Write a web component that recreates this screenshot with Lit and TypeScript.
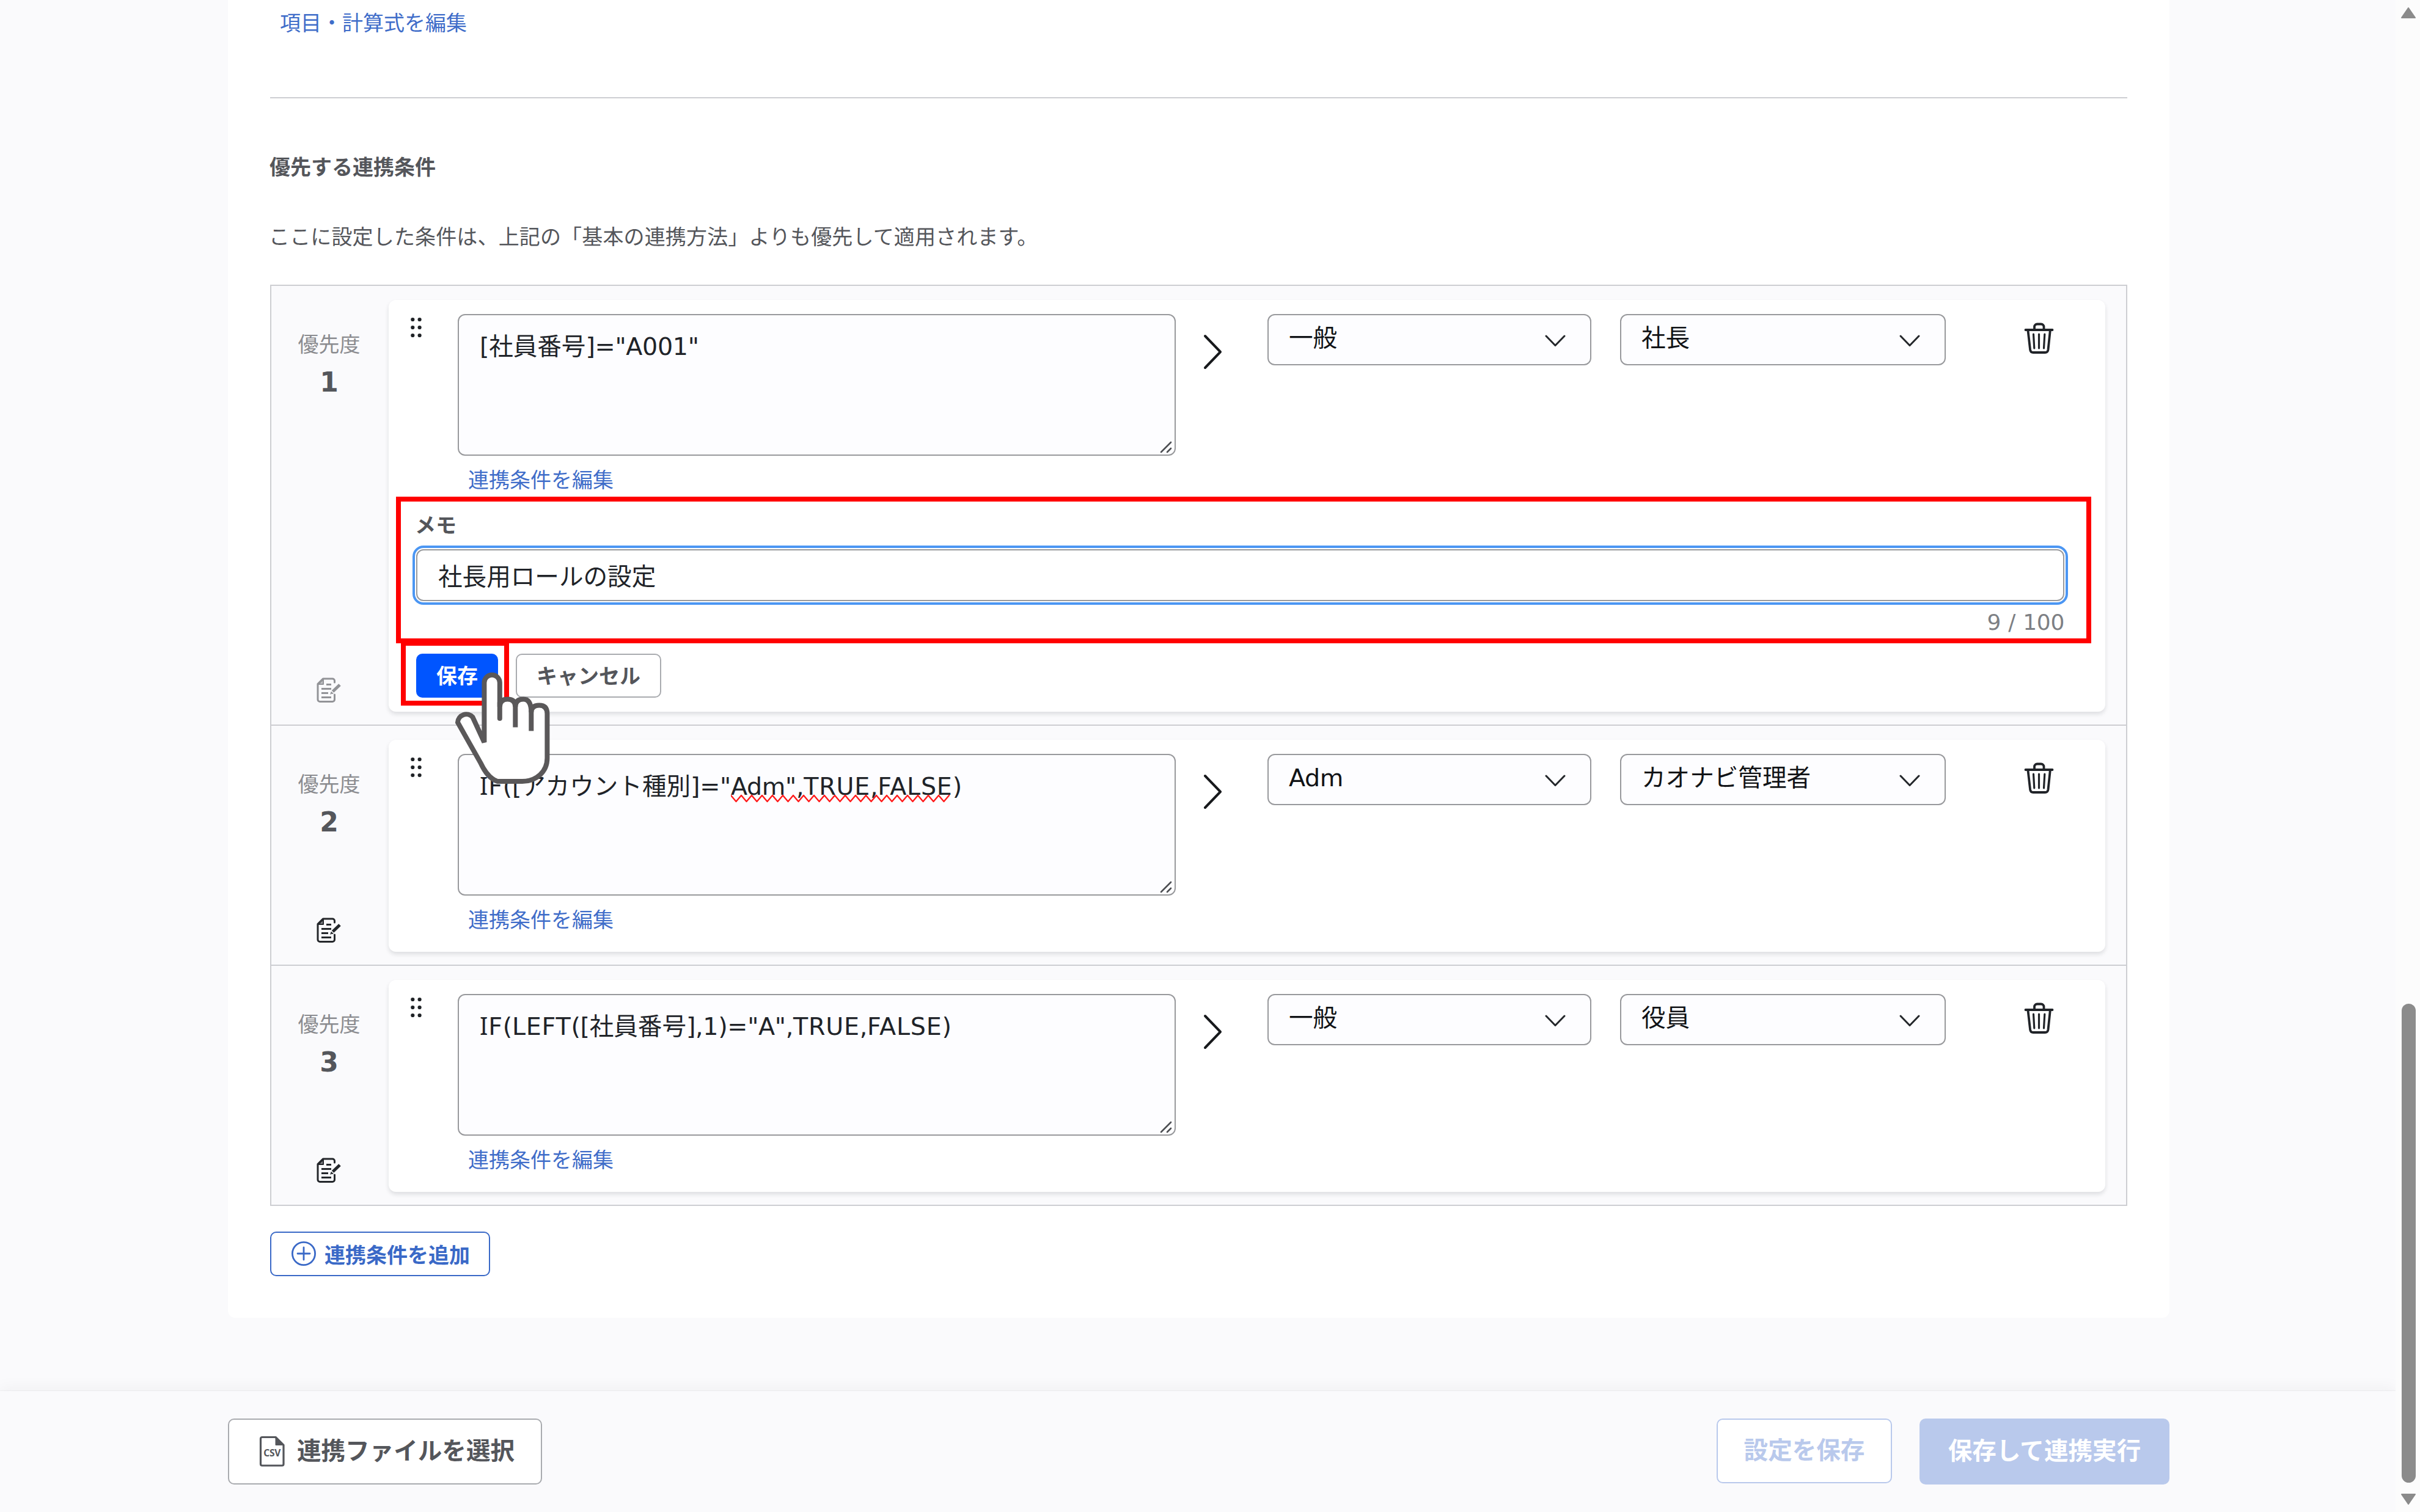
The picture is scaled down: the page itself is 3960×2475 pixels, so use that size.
import { LitElement, html, svg, css, nothing } from "lit";
import { customElement, property } from "lit/decorators.js";

interface Condition {
  order: number;
  formula: string;
  misspelled?: string;
  tail?: string;
  source: string;
  role: string;
  memo?: string;
}

const CONDITIONS: Condition[] = [
  { order: 1, formula: '[社員番号]="A001"', source: "一般", role: "社長", memo: "社長用ロールの設定" },
  {
    order: 2,
    formula: 'IF([アカウント種別]="',
    misspelled: 'Adm",TRUE,FALSE',
    tail: ")",
    source: "Adm",
    role: "カオナビ管理者",
  },
  { order: 3, formula: 'IF(LEFT([社員番号],1)="A",TRUE,FALSE)', source: "一般", role: "役員" },
];

const keyword = (text: string) => (text === "IF" ? html`<span class="cap-i">I</span>F` : text);

/* Latin runs are set in a wider face than the Japanese text around them,
   and function names and constants a little looser still. */
const mixed = (text: string) =>
  text
    .split(/([\x20-\x7e]+)/)
    .filter((part) => part)
    .map((part) =>
      /^[\x20-\x7e]/.test(part)
        ? html`<span class="latin">${part
            .split(/([A-Z]{2,})/)
            .filter((c) => c)
            .map((c) => (/^[A-Z]{2,}$/.test(c) ? html`<span class="caps">${keyword(c)}</span>` : c))}</span>`
        : part
    );

const shared = css`
  *,
  *::before,
  *::after {
    box-sizing: border-box;
  }
  svg {
    display: block;
    fill: none;
    stroke: currentColor;
    stroke-linecap: round;
    stroke-linejoin: round;
  }
  .latin {
    font-family: "DejaVu Sans", sans-serif;
    letter-spacing: -0.008em;
    line-height: 0;
    white-space: pre;
  }
  .caps {
    letter-spacing: 0.02em;
  }
  .cap-i {
    font-family: "Noto Sans", sans-serif;
  }
  .link {
    color: #3f6dc9;
    font-size: 34px;
    line-height: 50px;
  }
`;

const dragIcon = svg`<svg class="drag" width="20" height="36" viewBox="0 0 20 36">
  ${[5, 18, 31].map((y) => [4.3, 15.6].map((x) => svg`<circle cx=${x} cy=${y} r="3.1" fill="#1f2226" stroke="none"/>`))}
</svg>`;

const arrowIcon = svg`<svg class="arrow" width="40" height="64" viewBox="0 0 40 64" stroke-width="4">
  <path d="M6 6 31 32 6 58"/></svg>`;

const caretIcon = svg`<svg class="caret" width="36" height="22" viewBox="0 0 36 22" stroke-width="3">
  <path d="M3 3 18 18.500 33 3"/></svg>`;

const trashIcon = svg`<svg class="trash" width="50" height="54" viewBox="14 12 50 54" stroke-width="3.800">
  <path d="M17.500 25H61.500M32 24V20a4.500 4.500 0 0 1 4.500-4.500H43a4.500 4.500 0 0 1 4.500 4.500V24M21.500 26l3.600 31.500q.6 4.500 5 4.500H49.500q4.400 0 5-4.500L57.800 26"/>
  <path stroke-width="3.200" d="M30.500 32l1.300 23M39.500 32V55M48.800 32l-1.300 23"/></svg>`;

const noteIcon = svg`<svg class="note" width="48" height="48" viewBox="14 12 48 48" stroke-width="3">
  <path d="M47.500 24V21.500a3.500 3.500 0 0 0-3.500-3.500H28.500L20 26.500V52a3.500 3.500 0 0 0 3.500 3.500H44a3.500 3.500 0 0 0 3.500-3.500V44"/>
  <path d="M29 19V27H21Z" fill="currentColor" fill-opacity=".55" stroke-width="2"/>
  <path stroke-linecap="butt" d="M34 27.500h8M26 34.500h16M26 41.500h11M26 48.500h16"/>
  <path stroke-width="5" stroke-linecap="butt" d="M44.500 39 56 28"/>
  <path d="M42 42.500 40.800 43.300 42 39.500 45 42Z" fill="currentColor" stroke-width="1"/></svg>`;

const plusIcon = svg`<svg width="42" height="42" viewBox="0 0 42 42" stroke-width="2.800">
  <circle cx="21" cy="21" r="18.600"/><path d="M21 11V31M11 21H31"/></svg>`;

const csvIcon = svg`<svg class="csv" width="42" height="52" viewBox="0 0 42 52" stroke-width="3.200">
  <path d="M27 2.500H5A2.500 2.500 0 0 0 2.500 5V46.500A2.500 2.500 0 0 0 5 49H37.500A2.500 2.500 0 0 0 40 46.500V15.500Z"/>
  <path d="M27 3V15.500H39.500Z" fill="currentColor" stroke-width="1"/>
  <text x="21.300" y="33.500" text-anchor="middle" textLength="28" fill="currentColor" stroke="none">CSV</text></svg>`;

const handIcon = svg`<svg class="hand" width="160" height="190" viewBox="0 0 160 190" stroke-width="8">
  <path class="hand-shape" stroke-linejoin="miter" stroke-miterlimit="2"
    d="M48.400 115V17.500a12.700 12.700 0 0 1 25.400 0V57q0-12.500 12.700-12.500T99.300 57q0-12.500 13-12.500T125.300 66q0-11.500 13-11.500T151.400 68V141C151.400 163 134 179 110.500 179H70C58 175 50 165 42 148L5 82.500A14 14 0 0 1 29.500 74Z"/>
  <path stroke-linecap="butt" d="M99.300 56V90.500M125.300 62V96.500"/><path d="M73.800 50V76"/></svg>`;

@customElement("select-box")
export class SelectBox extends LitElement {
  @property() value = "";

  static styles = [
    shared,
    css`
      :host {
        display: flex;
        box-sizing: border-box;
        align-items: center;
        justify-content: space-between;
        height: 84px;
        padding: 0 39px 0 33px;
        border: 2px solid #98999c;
        border-radius: 12px;
        background: #fdfdff;
        color: #111316;
        font-size: 39.6px;
        line-height: 60px;
      }
      .value {
        padding-bottom: 9px;
      }
      .caret {
        margin-top: 3px;
        color: #24272b;
      }
    `,
  ];

  render() {
    return html`<span class="value">${mixed(this.value)}</span>${caretIcon}`;
  }
}

@customElement("condition-row")
export class ConditionRow extends LitElement {
  @property({ attribute: false }) condition!: Condition;

  static styles = [
    shared,
    css`
      :host {
        display: grid;
        grid-template-columns: 192px 1fr;
        box-sizing: border-box;
        min-height: 393px;
        padding: 23px 34px 21px 0;
        border-bottom: 2px solid #cdced2;
      }
      .priority {
        display: flex;
        flex-direction: column;
        align-items: center;
        padding: 47px 3px 12px 0;
        color: #8b8c90;
        font-size: 34px;
        line-height: 50px;
      }
      .order {
        flex: 1;
        margin-top: 9px;
        color: #54565b;
        font: bold 44px/54px "Noto Sans", sans-serif;
      }
      .order .latin {
        letter-spacing: 0;
      }
      .note {
        margin-right: 1px;
      }
      .note-button {
        color: #24272b;
      }
      .muted {
        color: #929397;
      }
      .card {
        position: relative;
        padding: 23px 67px 23px 0;
        border-radius: 12px;
        background: #fff;
        box-shadow: 0 4px 7px rgba(20, 22, 30, 0.12);
      }
      .main {
        display: grid;
        grid-template-columns: 35px 78px 1175px 46px 104px 530px 47px 533px 128px 50px;
        align-items: start;
        height: 232px;
      }
      .drag {
        grid-column: 2;
        margin-top: 4px;
      }
      .formula {
        position: relative;
        grid-column: 3;
        height: 232px;
        padding: 20px 34px;
        border: 2px solid #98999c;
        border-radius: 12px;
        background: #fdfdff;
        color: #202328;
        font-size: 39.6px;
        line-height: 60px;
        white-space: nowrap;
      }
      .misspelled {
        position: relative;
        display: inline-block;
        line-height: 60px;
      }
      .squiggle {
        position: absolute;
        left: 0;
        top: 44px;
        width: 100%;
        height: 14px;
        color: #ff1a1a;
      }
      .grip {
        position: absolute;
        right: 1px;
        bottom: 0;
        color: #4d4f53;
      }
      .arrow {
        grid-column: 5;
        margin: 30px 0 0 -4px;
        color: #17191c;
      }
      .source {
        grid-column: 6;
      }
      .role {
        grid-column: 8;
      }
      .trash {
        grid-column: 10;
        margin: 13px 0 0 -1px;
        color: #202328;
      }
      .edit {
        margin: 14px 0 0 130px;
      }
      .memo {
        margin-left: 45px;
      }
      .memo-label {
        margin: 24px 0 0 -2px;
        color: #54565b;
        font-size: 34px;
        font-weight: bold;
        line-height: 50px;
      }
      .memo-input {
        height: 85px;
        margin-top: 15px;
        padding: 12px 34px;
        border: 2px solid #98999c;
        border-radius: 12px;
        outline: 4px solid #4b96f3;
        outline-offset: 2px;
        color: #202328;
        font-size: 39.6px;
        line-height: 60px;
      }
      .counter {
        margin-top: 14px;
        color: #7d7f84;
        font-size: 36px;
        line-height: 40px;
        text-align: right;
        word-spacing: 1px;
      }
      .actions {
        display: flex;
        gap: 29px;
        margin-top: 32px;
      }
      .button {
        display: flex;
        align-items: center;
        justify-content: center;
        width: 238px;
        height: 72px;
        padding-bottom: 4px;
        border: 2px solid #a9abaf;
        border-radius: 10px;
        color: #54565b;
        font-size: 34px;
        font-weight: bold;
      }
      .save {
        width: 134px;
        border-color: #0055ff;
        background: #0055ff;
        color: #fff;
      }
      .highlight {
        position: absolute;
        left: 12px;
        top: 322px;
        width: 2774px;
        height: 240px;
        border: 8px solid #ff0000;
      }
      .highlight-save {
        left: 20px;
        top: 558px;
        width: 177px;
        height: 106px;
      }
      .hand {
        position: absolute;
        z-index: 2;
        left: 108px;
        top: 609px;
        overflow: visible;
        color: #5a5859;
      }
      .hand-shape {
        fill: #fff;
      }
    `,
  ];

  private squiggle() {
    const points = Array.from({ length: 43 }, (_, i) => `${i * 8.5},${i % 2 ? 12 : 2}`).join(" ");
    return html`<svg class="squiggle" stroke-width="2.4"><polyline points=${points} /></svg>`;
  }

  private memoEditor(memo: string) {
    return html`
      <div class="memo">
        <div class="memo-label">メモ</div>
        <div class="memo-input">${memo}</div>
        <div class="counter">${mixed(`${memo.length} / 100`)}</div>
        <div class="actions">
          <div class="button save">保存</div>
          <div class="button">キャンセル</div>
        </div>
      </div>
      <div class="highlight"></div>
      <div class="highlight highlight-save"></div>
      ${handIcon}
    `;
  }

  render() {
    const c = this.condition;
    return html`
      <div class="priority">
        <div>優先度</div>
        <div class="order">${mixed(String(c.order))}</div>
        <div class=${c.memo ? "muted" : "note-button"}>${noteIcon}</div>
      </div>
      <div class="card">
        <div class="main">
          ${dragIcon}
          <div class="formula">${mixed(c.formula)}${c.misspelled
              ? html`<span class="misspelled">${mixed(c.misspelled)}${this.squiggle()}</span>${mixed(c.tail ?? "")}`
              : nothing}
            <svg class="grip" width="24" height="24" viewBox="0 0 24 24" stroke-width="2.6">
              <path d="M3 20 19 4M13 20 19 14" />
            </svg>
          </div>
          ${arrowIcon}
          <select-box class="source" .value=${c.source}></select-box>
          <select-box class="role" .value=${c.role}></select-box>
          ${trashIcon}
        </div>
        <div class="link edit">連携条件を編集</div>
        ${c.memo ? this.memoEditor(c.memo) : nothing}
      </div>
    `;
  }
}

@customElement("app-root")
export class AppRoot extends LitElement {
  static styles = [
    shared,
    css`
      :host {
        display: flex;
        width: 3960px;
        height: 2475px;
        overflow: hidden;
        background: #fafafc;
        color: #54565b;
        font-family: "Noto Sans", "Noto Sans CJK JP", sans-serif;
      }
      .page {
        display: flex;
        flex-direction: column;
        width: 3920px;
      }
      .panel {
        width: 3177px;
        height: 2157px;
        margin: 0 0 120px 373px;
        padding: 12px 69px 0;
        border-radius: 0 0 12px 12px;
        background: #fff;
      }
      .items-link {
        margin-left: 16px;
      }
      .rule {
        height: 2px;
        margin-top: 97px;
        background: #cdced2;
      }
      .heading {
        margin: 87px 0 0 -1px;
        font-size: 34px;
        font-weight: bold;
        line-height: 50px;
      }
      .lead {
        margin: 64px 0 0 -2px;
        font-size: 34px;
        letter-spacing: 0.15px;
        line-height: 50px;
      }
      .table {
        margin-top: 54px;
        border: solid #cdced2;
        border-width: 2px 2px 0;
        background: #fafafc;
      }
      .add {
        display: flex;
        align-items: center;
        gap: 13px;
        width: 360px;
        height: 73px;
        margin-top: 42px;
        padding: 0 31px 1px 32px;
        border: 2.5px solid #3a69c7;
        border-radius: 10px;
        color: #3a69c7;
        font-size: 34px;
        font-weight: bold;
        white-space: nowrap;
      }
      .footer {
        display: flex;
        gap: 45px;
        height: 198px;
        padding: 45px 370px 0 373px;
        background: #fafafc;
        box-shadow: 0 -1px 1px rgba(30, 32, 40, 0.04), 0 -3px 26px rgba(30, 32, 40, 0.05);
      }
      .button {
        display: flex;
        align-items: center;
        justify-content: center;
        height: 108px;
        padding-bottom: 8px;
        border: 2px solid #a9abaf;
        border-radius: 10px;
        background: #fff;
        font-size: 39.6px;
        font-weight: bold;
        white-space: nowrap;
      }
      .file {
        gap: 20px;
        width: 514px;
        margin-right: auto;
        padding-left: 6px;
      }
      .csv {
        margin-top: 8px;
      }
      .csv text {
        font: bold 15.5px "Noto Sans", sans-serif;
      }
      .store {
        width: 287px;
        height: 106px;
        border-color: #b9c9ec;
        color: #b9c9ec;
      }
      .run {
        width: 409px;
        border-color: #b9c9ec;
        background: #b9c9ec;
        color: #fff;
      }
      .scrollbar {
        display: flex;
        flex-direction: column;
        align-items: center;
        justify-content: space-between;
        width: 40px;
        padding: 10px 0 10px 2px;
        background: #fcfcfc;
        color: #8b8b8b;
      }
      .thumb {
        width: 23px;
        height: 784px;
        margin: auto 0 16px;
        border-radius: 12px;
        background: #8b8b8b;
      }
      .scrollbar svg {
        fill: currentColor;
      }
    `,
  ];

  render() {
    return html`
      <div class="page" lang="ja">
        <div class="panel">
          <div class="link items-link">項目・計算式を編集</div>
          <div class="rule"></div>
          <div class="heading">優先する連携条件</div>
          <div class="lead">ここに設定した条件は、上記の「基本の連携方法」よりも優先して適用されます。</div>
          <div class="table">
            ${CONDITIONS.map((c) => html`<condition-row .condition=${c}></condition-row>`)}
          </div>
          <div class="add">${plusIcon}<span>連携条件を追加</span></div>
        </div>
        <div class="footer">
          <div class="button file">${csvIcon}<span>連携ファイルを選択</span></div>
          <div class="button store">設定を保存</div>
          <div class="button run">保存して連携実行</div>
        </div>
      </div>
      <div class="scrollbar">
        <svg width="26" height="22" viewBox="0 0 26 22" stroke-width="2"><path d="M13 3 24 19H2Z" /></svg>
        <div class="thumb"></div>
        <svg width="26" height="22" viewBox="0 0 26 22" stroke-width="2"><path d="M13 19 2 3H24Z" /></svg>
      </div>
    `;
  }
}
